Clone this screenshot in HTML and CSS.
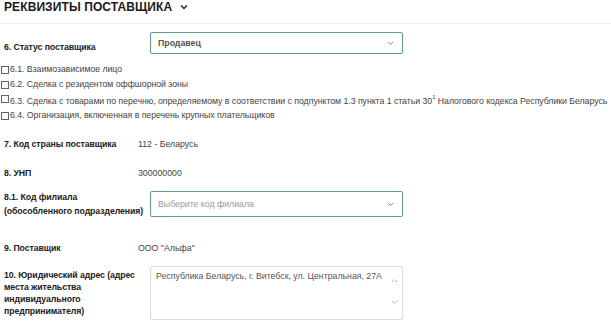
FILE: index.html
```html
<!DOCTYPE html>
<html lang="ru">
<head>
<meta charset="utf-8">
<link rel="stylesheet" href="styles.css">
</head>
<body>
<div class="header">
  <h1 class="title">РЕКВИЗИТЫ ПОСТАВЩИКА</h1>
  <svg class="title-chev" width="8" height="6" viewBox="0 0 8 6"><polyline points="1,1.5 4,4.5 7,1.5" fill="none" stroke="#222" stroke-width="1.4"/></svg>
</div>
<div class="form">
  <div class="row row-status">
    <div class="label">6. Статус поставщика</div>
    <div class="select select-sm">
      <span class="select-value">Продавец</span>
      <svg class="chev" width="7" height="5" viewBox="0 0 7 5"><polyline points="1,1 3.5,3.5 6,1" fill="none" stroke="#888" stroke-width="1"/></svg>
    </div>
  </div>
  <div class="checks">
    <label class="check"><input type="checkbox" class="cb"><span class="check-text">6.1. Взаимозависимое лицо</span></label>
    <label class="check"><input type="checkbox" class="cb"><span class="check-text">6.2. Сделка с резидентом оффшорной зоны</span></label>
    <label class="check check-sup"><input type="checkbox" class="cb"><span class="check-text">6.3. Сделка с товарами по перечню, определяемому в соответствии с подпунктом 1.3 пункта 1 статьи 30<sup>1</sup> Налогового кодекса Республики Беларусь</span></label>
    <label class="check"><input type="checkbox" class="cb"><span class="check-text">6.4. Организация, включенная в перечень крупных плательщиков</span></label>
  </div>
  <div class="row row-country">
    <div class="label">7. Код страны поставщика</div>
    <div class="value">112 - Беларусь</div>
  </div>
  <div class="row row-unp">
    <div class="label">8. УНП</div>
    <div class="value">300000000</div>
  </div>
  <div class="row row-branch">
    <div class="label label-multi">8.1. Код филиала<br>(обособленного подразделения)</div>
    <div class="select select-lg">
      <span class="select-placeholder">Выберите код филиала</span>
      <svg class="chev" width="7" height="5" viewBox="0 0 7 5"><polyline points="1,1 3.5,3.5 6,1" fill="none" stroke="#888" stroke-width="1"/></svg>
    </div>
  </div>
  <div class="row row-supplier">
    <div class="label">9. Поставщик</div>
    <div class="value">ООО "Альфа"</div>
  </div>
  <div class="row row-address">
    <div class="label label-address">10. Юридический адрес (адрес<br>места жительства<br>индивидуального<br>предпринимателя)</div>
    <div class="textarea">
      <span class="textarea-text">Республика Беларусь, г. Витебск, ул. Центральная, 27А</span>
      <svg class="scroll scroll-up" width="7" height="5" viewBox="0 0 7 5"><polyline points="1,4 3.5,1.5 6,4" fill="none" stroke="#bbb" stroke-width="1"/></svg>
      <svg class="scroll scroll-down" width="7" height="5" viewBox="0 0 7 5"><polyline points="1,1 3.5,3.5 6,1" fill="none" stroke="#bbb" stroke-width="1"/></svg>
    </div>
  </div>
</div>
</body>
</html>
```
FILE: styles.css
```css
* { box-sizing: border-box; }
html, body {
  margin: 0;
  padding: 0;
  background: #fff;
  font-family: "Liberation Sans", Arial, sans-serif;
  color: #222;
}
.header {
  height: 24px;
  border-bottom: 1px solid #ececec;
  display: flex;
  align-items: flex-start;
  padding-left: 4px;
}
.title {
  margin: 0;
  font-size: 12px;
  line-height: 14px;
  font-weight: bold;
  color: #1a1a1a;
  letter-spacing: 0.1px;
}
.title-chev {
  margin-left: 8px;
  margin-top: 4px;
}
.form {
  font-size: 8.75px;
}
.row {
  display: grid;
  grid-template-columns: 134px 1fr;
  padding-left: 4px;
  line-height: 14px;
}
.label {
  font-weight: bold;
  color: #222;
  white-space: nowrap;
  letter-spacing: -0.1px;
}
.value {
  color: #444;
}
.row-status {
  margin-top: 8px;
  align-items: center;
}
.row-status .label { padding-top: 7px; }
.select {
  margin-left: 12px;
  width: 253px;
  border: 1px solid #5e9e83;
  border-radius: 2px;
  display: flex;
  align-items: center;
  justify-content: space-between;
  padding: 0 8px 0 7px;
}
.select-sm { height: 22px; }
.select-lg { height: 26px; }
.select-value {
  font-weight: bold;
  color: #555;
}
.select-placeholder {
  color: #9a9a9a;
}
.chev { display: block; }
.checks {
  margin-top: 8px;
  display: flex;
  flex-direction: column;
}
.check {
  display: flex;
  align-items: center;
  height: 15px;
  color: #444;
  white-space: nowrap;
}
.check-text {
  line-height: 15px;
  letter-spacing: -0.04px;
}
.check-sup {
  height: 16px;
}
.check-sup .check-text { padding-top: 2px; }
.check-sup .cb { margin-top: -2px; }
.check sup {
  font-size: 6px;
  line-height: 0;
  vertical-align: 5px;
}
.cb {
  appearance: none;
  -webkit-appearance: none;
  width: 8px;
  height: 8px;
  margin: 0 1px 0 1px;
  border: 1px solid #666;
  border-radius: 0;
  background: #fff;
  flex: none;
}
.row-country { margin-top: 14px; }
.row-unp { margin-top: 15px; }
.row-branch {
  margin-top: 11px;
  align-items: start;
}
.label-multi { margin-top: -1px; }
.row-supplier { margin-top: 23px; }
.row-address {
  margin-top: 11px;
  align-items: start;
}
.label-address {
  line-height: 12px;
  padding-top: 3px;
}
.textarea {
  position: relative;
  margin-left: 12px;
  width: 253px;
  height: 54px;
  border: 1px solid #dcdcdc;
  border-radius: 2px;
  padding: 2px 10px 0 5px;
  line-height: 14px;
  color: #555;
  white-space: nowrap;
  box-shadow: 0 0 1px rgba(0,0,0,0.05);
}
.scroll {
  position: absolute;
  right: 4px;
  display: block;
}
.scroll-up { top: 11px; }
.scroll-down { top: 33px; }
```
